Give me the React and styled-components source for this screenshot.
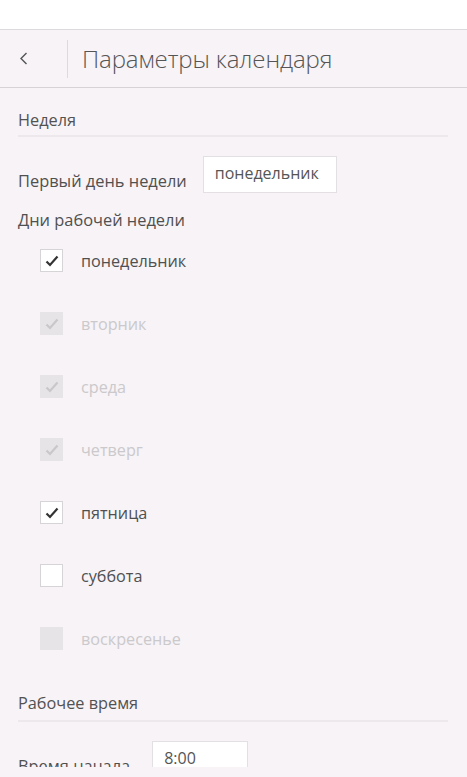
import React from 'react';
import styled, { createGlobalStyle } from 'styled-components';

const GlobalStyle = createGlobalStyle`
  html, body {
    margin: 0;
    padding: 0;
    background: #ffffff;
  }
  body {
    font-family: "Open Sans", "Noto Sans", sans-serif;
    color: #505050;
  }
`;

const days = [
  { label: 'понедельник', checked: true },
  { label: 'вторник', checked: true, disabled: true },
  { label: 'среда', checked: true, disabled: true },
  { label: 'четверг', checked: true, disabled: true },
  { label: 'пятница', checked: true },
  { label: 'суббота', checked: false },
  { label: 'воскресенье', checked: false, disabled: true },
];

const Check = ({ color }) => (
  <svg width="14" height="12" viewBox="0 0 14 12">
    <polyline points="1.5,6.5 5,10 12.5,1.5" fill="none" stroke={color} strokeWidth="2.2" />
  </svg>
);

const App = () => (
  <Page>
    <GlobalStyle />
    <TopStrip />
    <Header>
      <BackButton>
        <svg width="9" height="13" viewBox="0 0 9 13">
          <polyline points="7.5,1 2,6.5 7.5,12" fill="none" stroke="#555" strokeWidth="1.4" />
        </svg>
      </BackButton>
      <Divider />
      <Title>Параметры календаря</Title>
    </Header>
    <Content>
      <SectionTitle>Неделя</SectionTitle>
      <FieldRow>
        <FieldLabel gap={16}>Первый день недели</FieldLabel>
        <Field width={134}>понедельник</Field>
      </FieldRow>
      <GroupLabel>Дни рабочей недели</GroupLabel>
      <DayList>
        {days.map(d => (
          <DayRow key={d.label}>
            <Box checked={d.checked} disabled={d.disabled}>
              {d.checked && <Check color={d.disabled ? '#c9c7c9' : '#333'} />}
            </Box>
            <DayLabel disabled={d.disabled}>{d.label}</DayLabel>
          </DayRow>
        ))}
      </DayList>
      <SectionTitle spaced>Рабочее время</SectionTitle>
      <FieldRow>
        <FieldLabel gap={22}>Время начала</FieldLabel>
        <Field width={96}>8:00</Field>
      </FieldRow>
    </Content>
  </Page>
);

const Page = styled.div`
  height: 777px;
  overflow: hidden;
  background: #f7f3f7;
`;

const TopStrip = styled.div`
  height: 29px;
  background: #ffffff;
`;

const Header = styled.header`
  display: flex;
  align-items: center;
  height: 57px;
  border-top: 1px solid #dcdadc;
  border-bottom: 1px solid #d6d3d6;
  background: #f7f3f7;
`;

const BackButton = styled.div`
  width: 46px;
  display: flex;
  justify-content: center;
  margin-right: 21px;
`;

const Divider = styled.div`
  width: 1px;
  height: 38px;
  background: #dedbde;
`;

const Title = styled.h1`
  margin: 0 0 0 14px;
  font-size: 24px;
  font-weight: 300;
  color: #555;
  line-height: 30px;
  letter-spacing: -0.1px;
`;

const Content = styled.main`
  height: 679px;
  overflow: hidden;
  padding: 0 19px 0 18px;
`;

const SectionTitle = styled.div`
  margin-top: ${p => (p.spaced ? 43 : 22)}px;
  padding-bottom: ${p => (p.spaced ? 7 : 5)}px;
  border-bottom: 2px solid #ece8ec;
  font-size: 16.3px;
  line-height: 20px;
  color: #525252;
`;

const FieldRow = styled.div`
  display: flex;
  align-items: flex-end;
  margin-top: 19px;
`;

const FieldLabel = styled.span`
  font-size: 16.4px;
  line-height: 20px;
  margin-bottom: 2px;
  margin-right: ${p => p.gap}px;
  white-space: nowrap;
`;

const Field = styled.div`
  box-sizing: border-box;
  width: ${p => p.width}px;
  height: 37px;
  padding: 5px 10px 0 11px;
  background: #ffffff;
  border: 1px solid #e2e0e2;
  font-size: 16px;
  line-height: 22px;
  color: #555;
  flex-shrink: 0;
`;

const GroupLabel = styled.div`
  margin-top: 17px;
  font-size: 16.4px;
  line-height: 20px;
`;

const DayList = styled.div`
  display: flex;
  flex-direction: column;
  gap: 40px;
  margin-top: 19px;
  padding-left: 22px;
`;

const DayRow = styled.label`
  display: flex;
  align-items: center;
  height: 23px;
`;

const Box = styled.span`
  box-sizing: border-box;
  width: 23px;
  height: 23px;
  display: flex;
  align-items: center;
  justify-content: center;
  background: ${p => (p.disabled ? '#e6e4e6' : '#ffffff')};
  border: 1px solid ${p => (p.disabled ? '#e6e4e6' : '#d6d4d6')};
  margin-right: 18px;
`;

const DayLabel = styled.span`
  font-size: 16.2px;
  color: ${p => (p.disabled ? '#cbc9cb' : '#505050')};
`;

export default App;
